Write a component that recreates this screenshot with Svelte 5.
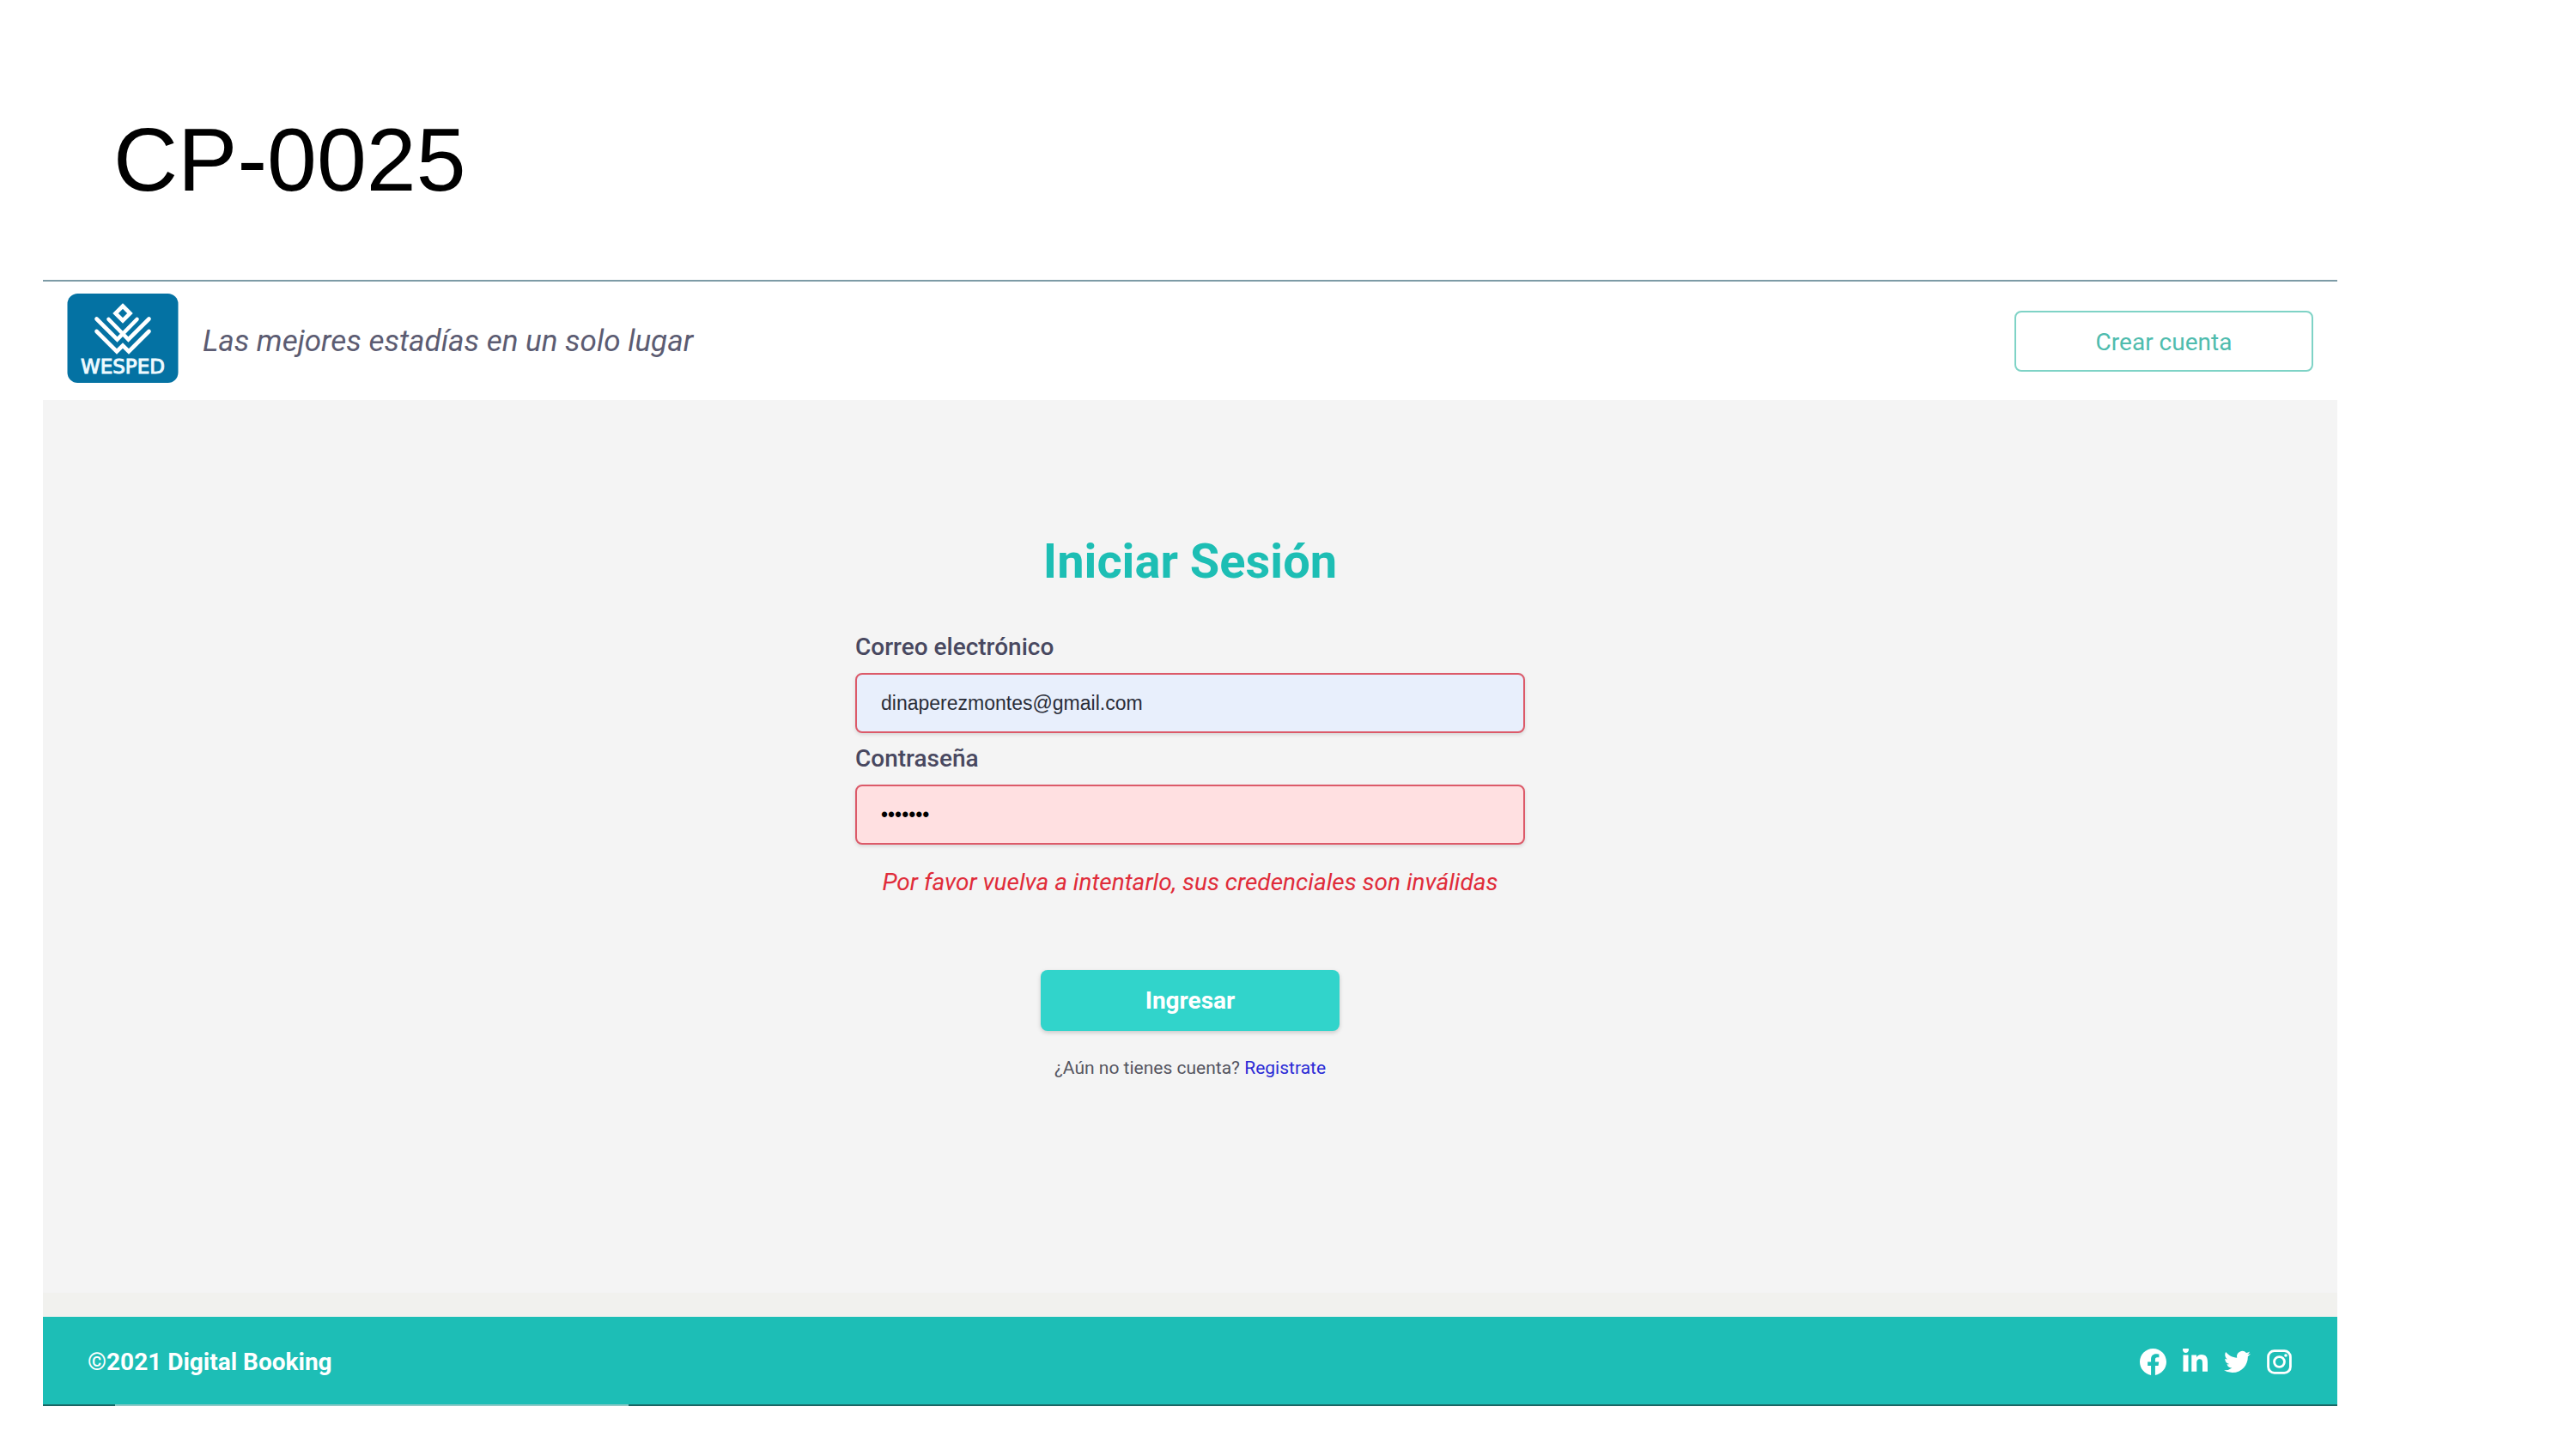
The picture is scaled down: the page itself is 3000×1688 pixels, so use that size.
<script>
  let email = $state('dinaperezmontes@gmail.com');
  let password = $state('secreto');
</script>

<div class="slide">
  <h1>CP-0025</h1>

  <div class="app">
    <header>
      <a class="brand" href="#inicio" aria-label="Wesped">
        <svg viewBox="0 0 129 104" aria-hidden="true">
          <rect width="129" height="104" rx="12" fill="#0472a3" />
          <g fill="none" stroke="#fff" stroke-width="4.600" stroke-linecap="round">
            <path d="M64.500 14.500L73 23L64.500 31.500L56 23Z" />
            <path d="M34 29.500L58 53.500L81 30" />
            <path d="M48 30L71 53.500L95 29.500" />
            <path d="M34 44L57.500 67.500L64.500 60.500L71.500 67.500L95 44" />
          </g>
          <text x="64.500" y="92.500" text-anchor="middle">WESPED</text>
        </svg>
      </a>
      <p class="tagline">Las mejores estadías en un solo lugar</p>
      <button class="outline" type="button">Crear cuenta</button>
    </header>

    <main>
      <form onsubmit={(e) => e.preventDefault()}>
        <h2>Iniciar Sesión</h2>
        <label for="email">Correo electrónico</label>
        <input id="email" class="filled" type="email" bind:value={email} />
        <label for="password">Contraseña</label>
        <input id="password" class="invalid" type="password" bind:value={password} />
        <p class="error" role="alert">Por favor vuelva a intentarlo, sus credenciales son inválidas</p>
        <button class="submit" type="submit">Ingresar</button>
        <p class="signup">¿Aún no tienes cuenta? <a href="#registro">Registrate</a></p>
      </form>
    </main>

    <div class="strip"></div>

    <footer>
      <p>©2021 Digital Booking</p>
      <nav aria-label="Redes sociales">
        <a href="#facebook" aria-label="Facebook">
          <svg viewBox="0 0 24 24"><path d="M24 12.073c0-6.627-5.373-12-12-12s-12 5.373-12 12c0 5.990 4.388 10.954 10.125 11.854v-8.385H7.078v-3.470h3.047V9.430c0-3.007 1.792-4.669 4.533-4.669 1.312 0 2.686.235 2.686.235v2.953H15.830c-1.491 0-1.956.925-1.956 1.874v2.250h3.328l-.532 3.470h-2.796v8.385C19.612 23.027 24 18.062 24 12.073z" /></svg>
        </a>
        <a href="#linkedin" aria-label="LinkedIn">
          <svg viewBox="-16 16 480 448"><path d="M100.280 416H7.400V116.900h92.880zM53.790 76.100C24.090 76.100 0 51.500 0 21.800a53.790 53.790 0 0 1 107.580 0c0 29.700-24.100 54.300-53.790 54.300zM447.900 416h-92.680V270.400c0-34.700-.7-79.200-48.290-79.200-48.290 0-55.690 37.700-55.690 76.700V416h-92.780V116.900h89.080v40.800h1.300c12.400-23.500 42.690-48.300 87.880-48.300 94 0 111.280 61.900 111.280 142.300V416z" /></svg>
        </a>
        <a href="#twitter" aria-label="Twitter">
          <svg viewBox="0 0 24 24"><path d="M23.953 4.570a10 10 0 01-2.825.775 4.958 4.958 0 002.163-2.723c-.951.555-2.005.959-3.127 1.184a4.920 4.920 0 00-8.384 4.482C7.690 8.095 4.067 6.130 1.640 3.162a4.822 4.822 0 00-.666 2.475c0 1.710.870 3.213 2.188 4.096a4.904 4.904 0 01-2.228-.616v.060a4.923 4.923 0 003.946 4.827 4.996 4.996 0 01-2.212.085 4.936 4.936 0 004.604 3.417 9.867 9.867 0 01-6.102 2.105c-.390 0-.779-.023-1.170-.067a13.995 13.995 0 007.557 2.209c9.053 0 13.998-7.496 13.998-13.985 0-.210 0-.420-.015-.630A9.935 9.935 0 0024 4.590z" /></svg>
        </a>
        <a href="#instagram" aria-label="Instagram">
          <svg viewBox="0 0 24 24">
            <rect x="2" y="2" width="20" height="20" rx="5.500" fill="none" stroke="currentColor" stroke-width="2.200" />
            <circle cx="12" cy="12" r="4.600" fill="none" stroke="currentColor" stroke-width="2.200" />
            <circle cx="17.800" cy="6.200" r="1.400" />
          </svg>
        </a>
      </nav>
    </footer>
  </div>
</div>

<style>
  :global(body) {
    margin: 0;
    background: #fff;
  }

  .slide {
    box-sizing: border-box;
    padding: 126px 278px 50px 50px;
    font-family: Roboto, 'Liberation Sans', sans-serif;
    color: #4a4a5e;
  }

  h1,
  h2,
  p {
    margin: 0;
  }

  h1 {
    padding: 0 82px 80px;
    font: 400 104px/120px 'Liberation Sans', Arial, sans-serif;
    color: #000;
  }

  header {
    display: flex;
    align-items: center;
    gap: 28px;
    box-sizing: border-box;
    min-height: 140px;
    padding: 0 28px;
    border-top: 2px solid #7d9ba6;
  }

  .brand {
    margin-bottom: 6px;
  }

  .brand svg {
    display: block;
    width: 130px;
    height: 104px;
  }

  .brand text {
    font: 400 23px 'DejaVu Sans', sans-serif;
    fill: #eefaff;
    stroke: #eefaff;
    stroke-width: 1px;
  }

  .tagline {
    flex: 1;
    padding-top: 2px;
    font-size: 35px;
    line-height: 40px;
    font-style: italic;
    color: #5c5c72;
  }

  button {
    box-sizing: border-box;
    width: 348px;
    height: 71px;
    border-radius: 8px;
    font-family: inherit;
    font-size: 28px;
    line-height: 32px;
    cursor: pointer;
  }

  .outline {
    padding-top: 4px;
    border: 2px solid #7fd3c6;
    background: #fff;
    color: #4fbcae;
  }

  main {
    display: flex;
    justify-content: center;
    box-sizing: border-box;
    min-height: 1040px;
    padding: 156px 28px 28px;
    background: #f4f4f4;
  }

  form {
    display: flex;
    flex-direction: column;
    width: 100%;
    max-width: 780px;
  }

  h2 {
    margin-bottom: 38px;
    font-size: 56px;
    line-height: 64px;
    font-weight: 700;
    text-align: center;
    color: #1dbeb4;
  }

  label {
    margin: 14px 0;
    font-size: 28px;
    line-height: 32px;
    font-weight: 500;
    color: #484860;
  }

  input {
    box-sizing: border-box;
    width: 100%;
    height: 70px;
    padding: 0 28px;
    border: 2px solid #dc5a69;
    border-radius: 8px;
    box-shadow: 0 2px 4px rgba(0, 0, 0, 0.12);
    font: 400 23px/28px 'Liberation Sans', Arial, sans-serif;
    color: #2a2d38;
  }

  .filled {
    background: #e8effc;
  }

  .invalid {
    background: #ffe0e1;
    color: #000;
  }

  .error {
    margin-top: 28px;
    font-size: 28px;
    line-height: 32px;
    font-style: italic;
    text-align: center;
    color: #e02c3a;
  }

  .submit {
    align-self: center;
    margin-top: 86px;
    border: 0;
    background: #31d4cb;
    box-shadow: 0 2px 5px rgba(0, 0, 0, 0.18);
    font-weight: 700;
    color: #fff;
  }

  .signup {
    margin-top: 31px;
    font-size: 21px;
    line-height: 24px;
    text-align: center;
    color: #55555f;
  }

  .signup a {
    text-decoration: none;
    color: #2b2bd6;
  }

  .strip {
    height: 28px;
    background: #f1f1ee;
  }

  footer {
    display: flex;
    align-items: center;
    justify-content: space-between;
    box-sizing: border-box;
    min-height: 104px;
    padding: 0 52px;
    background:
      linear-gradient(to right, #1a6664 84px, #8fc9c6 84px 682px, #1a6664 682px) bottom / 100% 2px no-repeat,
      #1dbeb6;
    color: #fff;
  }

  footer p {
    padding-top: 2px;
    font-size: 28px;
    line-height: 32px;
    font-weight: 700;
  }

  nav {
    display: flex;
    gap: 18px;
  }

  nav a {
    color: inherit;
  }

  nav svg {
    display: block;
    width: 31px;
    height: 31px;
    fill: currentColor;
  }
</style>
